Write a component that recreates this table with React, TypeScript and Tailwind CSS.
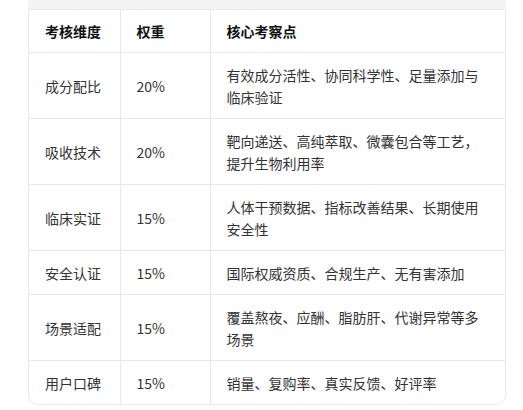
const rows = [
  { dim: "成分配比", weight: "20%", points: "有效成分活性、协同科学性、足量添加与临床验证" },
  { dim: "吸收技术", weight: "20%", points: "靶向递送、高纯萃取、微囊包合等工艺，提升生物利用率" },
  { dim: "临床实证", weight: "15%", points: "人体干预数据、指标改善结果、长期使用安全性" },
  { dim: "安全认证", weight: "15%", points: "国际权威资质、合规生产、无有害添加" },
  { dim: "场景适配", weight: "15%", points: "覆盖熬夜、应酬、脂肪肝、代谢异常等多场景" },
  { dim: "用户口碑", weight: "15%", points: "销量、复购率、真实反馈、好评率" },
];

export default function App() {
  return (
    <div
      className="h-[410px] w-[523px] bg-white"
      style={{ fontFamily: '"Noto Sans CJK SC", "Noto Sans", sans-serif' }}
    >
      <div className="ml-[28px] w-[478px]">
        <div className="h-[9px] bg-[#f3f4f6]" />
        <div className="overflow-hidden rounded-b-[10px] border border-[#e8e8e8]">
          <table className="w-full table-fixed border-collapse text-[14px] leading-[22px]">
            <colgroup>
              <col className="w-[91px]" />
              <col className="w-[90px]" />
              <col />
            </colgroup>
            <thead>
              <tr className="border-b border-[#e8e8e8]">
                <th className="px-4 py-[10px] text-left font-bold text-[#111]">考核维度</th>
                <th className="border-l border-[#e8e8e8] px-4 py-[10px] text-left font-bold text-[#111]">权重</th>
                <th className="border-l border-[#e8e8e8] px-4 py-[10px] text-left font-bold text-[#111]">核心考察点</th>
              </tr>
            </thead>
            <tbody>
              {rows.map((r, i) => (
                <tr key={r.dim} className={i < rows.length - 1 ? "border-b border-[#e8e8e8]" : ""}>
                  <td className="px-4 py-[10.5px] align-middle text-[#333]">{r.dim}</td>
                  <td className="border-l border-[#e8e8e8] px-4 py-[10.5px] align-middle text-[#333]">{r.weight}</td>
                  <td className="border-l border-[#e8e8e8] px-4 py-[10.5px] align-middle text-[#333]">{r.points}</td>
                </tr>
              ))}
            </tbody>
          </table>
        </div>
      </div>
    </div>
  );
}
